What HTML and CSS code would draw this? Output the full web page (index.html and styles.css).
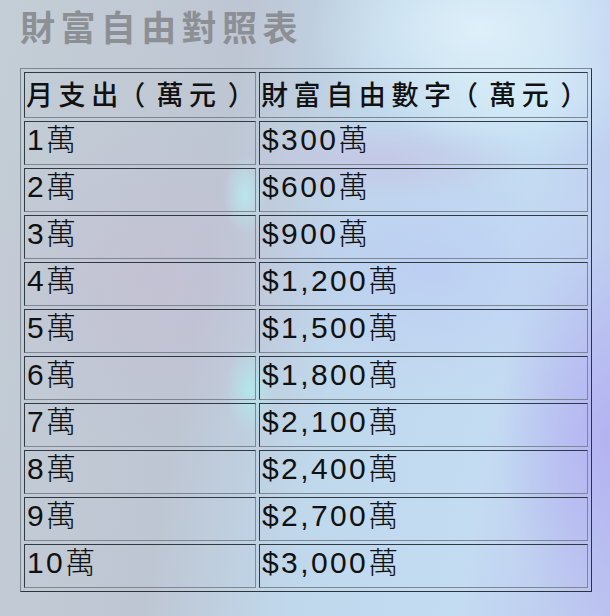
FILE: index.html
```html
<!DOCTYPE html>
<html lang="zh-Hant">
<head>
<meta charset="utf-8">
<title>財富自由對照表</title>
<link rel="stylesheet" href="styles.css">
</head>
<body>
<div class="page">
  <h1 class="title">財富自由對照表</h1>
  <table class="wealth">
    <thead>
      <tr><th class="c1">月支出<span class="lp">（</span>萬元<span class="rp">）</span></th><th class="c2">財富自由數字<span class="lp">（</span>萬元<span class="rp">）</span></th></tr>
    </thead>
    <tbody>
      <tr><td>1萬</td><td>$300萬</td></tr>
      <tr><td>2萬</td><td>$600萬</td></tr>
      <tr><td>3萬</td><td>$900萬</td></tr>
      <tr><td>4萬</td><td>$1,200萬</td></tr>
      <tr><td>5萬</td><td>$1,500萬</td></tr>
      <tr><td>6萬</td><td>$1,800萬</td></tr>
      <tr><td>7萬</td><td>$2,100萬</td></tr>
      <tr><td>8萬</td><td>$2,400萬</td></tr>
      <tr><td>9萬</td><td>$2,700萬</td></tr>
      <tr><td>10萬</td><td>$3,000萬</td></tr>
    </tbody>
  </table>
</div>
</body>
</html>
```
FILE: styles.css
```css
html, body {
  margin: 0;
  padding: 0;
}
body {
  width: 610px;
  height: 616px;
  overflow: hidden;
  font-family: "Liberation Sans", "Noto Sans CJK TC", sans-serif;
  background-color: #c3d0dc;
  background-image:
    radial-gradient(ellipse 170px 110px at 480px 30px, rgba(225,242,250,0.9), rgba(225,242,250,0) 100%),
    radial-gradient(ellipse 130px 60px at 520px 100px, rgba(210,236,248,0.7), rgba(210,236,248,0) 100%),
    radial-gradient(ellipse 22px 40px at 245px 195px, rgba(185,240,245,0.75), rgba(185,240,245,0) 100%),
    radial-gradient(ellipse 25px 45px at 250px 390px, rgba(175,240,240,0.7), rgba(175,240,240,0) 100%),
    radial-gradient(ellipse 110px 200px at 610px 440px, rgba(178,176,242,0.9), rgba(178,176,242,0) 100%),
    radial-gradient(ellipse 150px 40px at 380px 160px, rgba(200,185,225,0.55), rgba(200,185,225,0) 100%),
    radial-gradient(ellipse 170px 120px at 430px 270px, rgba(185,200,245,0.6), rgba(185,200,245,0) 100%),
    radial-gradient(ellipse 180px 160px at 150px 280px, rgba(198,190,212,0.6), rgba(198,190,212,0) 100%),
    linear-gradient(100deg, #c4ced6 0%, #bec6d3 35%, #c0d8ec 55%, #c4dcf2 78%, #bcc4ef 100%);
}
.page {
  padding: 8px 19px 0 20px;
}
.title {
  margin: 0 0 25px 0;
  font-family: "Noto Sans CJK TC", sans-serif;
  font-size: 35px;
  line-height: 35px;
  font-weight: 700;
  letter-spacing: 5.4px;
  color: #8c9095;
}
.wealth {
  width: 572px;
  border-collapse: separate;
  border-spacing: 3px;
  border: 1px solid;
  border-color: #7d8892 #2e3338 #2e3338 #7d8892;
  table-layout: fixed;
}
.wealth th,
.wealth td {
  box-sizing: border-box;
  border: 1px solid;
  border-color: #2f3a42 #7d8892 #7d8892 #2f3a42;
  padding: 1px 1px 1px 2px;
  text-align: left;
  vertical-align: top;
  color: #111;
  white-space: nowrap;
}
.wealth th {
  height: 46px;
  padding-left: 1px;
  font-family: "Noto Sans CJK TC", sans-serif;
  font-size: 27px;
  line-height: 40px;
  font-weight: 500;
  letter-spacing: 5.6px;
}
.wealth th .lp {
  font-feature-settings: "halt" 1;
  padding-left: 8px;
  padding-right: 5.5px;
}
.wealth th .rp {
  font-feature-settings: "halt" 1;
  padding-left: 6px;
  padding-right: 7.5px;
}
.wealth td {
  height: 44px;
  font-size: 30px;
  line-height: 34px;
  font-weight: 300;
  letter-spacing: 2.4px;
}
.wealth .c1 { width: 232px; }
.wealth .c2 { width: 329px; }
```
